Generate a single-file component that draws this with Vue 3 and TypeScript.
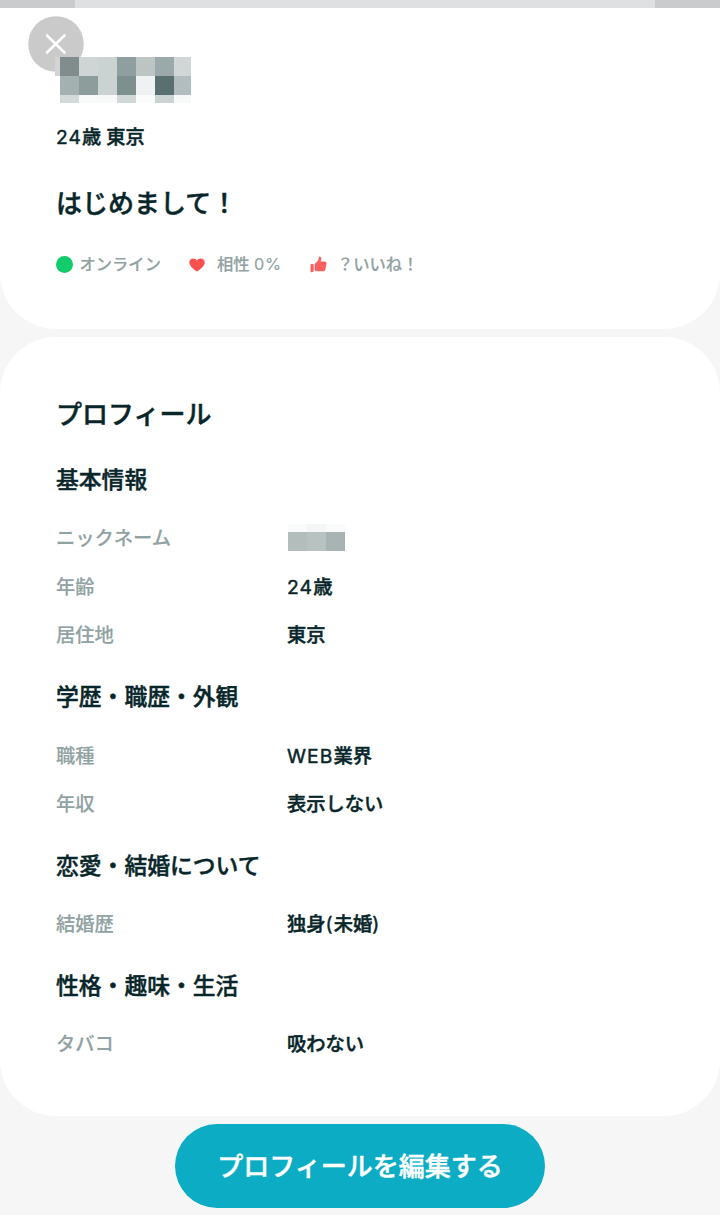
<script setup lang="ts">
import { h, type FunctionalComponent } from 'vue'

interface Row {
  label: string
  value: string
  masked?: boolean
}
interface Section {
  title: string
  rows: Row[]
}
interface Tile {
  x: number
  y: number
  w: number
  h: number
  fill: string
}

// Sets Latin runs apart from Japanese ones so each gets its own weight and spacing.
const MixedText: FunctionalComponent<{ text: string }> = (props) =>
  h(
    'span',
    (props.text.match(/[\x21-\x7e]+|[^\x21-\x7e]+/g) ?? []).map((run) =>
      /[\x21-\x7e]/.test(run) ? h('span', { class: 'latin' }, run) : run,
    ),
  )
MixedText.props = ['text']

const sections: Section[] = [
  {
    title: '基本情報',
    rows: [
      { label: 'ニックネーム', value: '', masked: true },
      { label: '年齢', value: '24歳' },
      { label: '居住地', value: '東京' },
    ],
  },
  {
    title: '学歴・職歴・外観',
    rows: [
      { label: '職種', value: 'WEB業界' },
      { label: '年収', value: '表示しない' },
    ],
  },
  { title: '恋愛・結婚について', rows: [{ label: '結婚歴', value: '独身(未婚)' }] },
  { title: '性格・趣味・生活', rows: [{ label: 'タバコ', value: '吸わない' }] },
]

const columns: number[] = [5, 24, 43, 62, 81, 100, 119, 136]
const bands: { y: number; h: number; fills: string[] }[] = [
  { y: 0, h: 19, fills: ['#818d8c', '#ced5d4', '#cbd3d2', '#8f9f9f', '#bcc5c4', '#9ca9ab', '#d1d7d7'] },
  { y: 19, h: 19, fills: ['#a4b1b1', '#8c9d9c', '#cbd3d2', '#7d908e', '#eff1f2', '#596f70', '#b1bdbe'] },
  { y: 38, h: 8, fills: ['#d2d9d8', '#f8fafa', '#f7f9f9', '#d1d8d7', '#fafbfb', '#ccd4d3', '#f7f9f9'] },
]
const nameTiles: Tile[] = [
  { x: 0, y: 0, w: 5, h: 19, fill: '#d3d5d5' },
  ...bands.flatMap((b) =>
    b.fills.map((fill, i) => ({ x: columns[i], y: b.y, w: columns[i + 1] - columns[i], h: b.h, fill })),
  ),
]
const nickTiles: Tile[] = [
  { x: 0, y: 0, w: 19, h: 8, fill: '#f9fafa' },
  { x: 19, y: 0, w: 19, h: 8, fill: '#f4f6f6' },
  { x: 38, y: 0, w: 19, h: 8, fill: '#f9fafa' },
  { x: 0, y: 8, w: 19, h: 19, fill: '#b3bebc' },
  { x: 19, y: 8, w: 19, h: 19, fill: '#b8c2c0' },
  { x: 38, y: 8, w: 19, h: 19, fill: '#a8b4b3' },
]
</script>

<template>
  <main class="screen">
    <div class="strip"><span class="strip-mid"></span></div>
    <section class="card summary">
      <button class="close" aria-label="閉じる">
        <svg width="56" height="56" viewBox="0 0 56 56">
          <circle cx="28" cy="28" r="27.8" fill="#cacaca" />
          <path d="M19 19.5 36.5 36.5M36.5 19.5 19 36.5" stroke="#fff" stroke-width="2.6" stroke-linecap="round" />
        </svg>
      </button>
      <svg class="name" width="136" height="46" viewBox="0 0 136 46" shape-rendering="crispEdges">
        <rect v-for="(t, i) in nameTiles" :key="i" :x="t.x" :y="t.y" :width="t.w" :height="t.h" :fill="t.fill" />
      </svg>
      <p class="place"><MixedText text="24歳 東京" /></p>
      <h1 class="greeting">はじめまして！</h1>
      <div class="stats">
        <span class="dot"></span>
        <span class="online">オンライン</span>
        <svg class="heart" width="16" height="14" viewBox="0 0 16 14">
          <path d="M8 13.6C5.8 12 0.3 8.4 0.3 4.5 0.3 2 2.1.4 4.3.4 5.9.4 7.2 1.3 8 2.6 8.8 1.3 10.1.4 11.7.4c2.2 0 4 1.6 4 4.1 0 3.9-5.5 7.5-7.7 9.1Z" fill="#fa5050" />
        </svg>
        <span class="match"><MixedText text="相性 0%" /></span>
        <svg class="thumb" width="17" height="17" viewBox="0 0 17 17">
          <path d="M1.7 7.9h.8c.7 0 1.2.5 1.2 1.2v5.3c0 .8-.5 1.4-1.2 1.6l-1 .2c-.6 0-1-.4-1-1V9.1c0-.7.5-1.2 1.2-1.2Z" fill="#f96160" />
          <path d="M4.6 8 8.1 4.6 8.8 1.5c.2-.8.9-1.1 1.6-.7 1.1.6 1.1 2.2.3 4.6h3.9c1.4 0 2.1.8 1.9 2l-1.1 6c-.2 1.2-.9 1.8-2.1 1.8H6.8c-1.3 0-2.2-.7-2.2-1.9Z" fill="#f96160" />
        </svg>
        <span class="likes">？いいね！</span>
      </div>
    </section>

    <section class="card profile">
      <h2 class="profile-title">プロフィール</h2>
      <div v-for="s in sections" :key="s.title" class="group">
        <h3 class="group-title">{{ s.title }}</h3>
        <dl v-for="r in s.rows" :key="r.label" class="row">
          <dt>{{ r.label }}</dt>
          <dd>
            <svg v-if="r.masked" class="nick" width="57" height="27" viewBox="0 0 57 27" shape-rendering="crispEdges">
              <rect v-for="(t, i) in nickTiles" :key="i" :x="t.x" :y="t.y" :width="t.w" :height="t.h" :fill="t.fill" />
            </svg>
            <MixedText v-else :text="r.value" />
          </dd>
        </dl>
      </div>
    </section>

    <footer class="footer">
      <button class="edit">プロフィールを編集する</button>
    </footer>
  </main>
</template>

<style>
body {
  margin: 0;
  background: #f6f6f6;
}
</style>

<style scoped>
.screen {
  width: 720px;
  height: 1215px;
  overflow: hidden;
  background: #f6f6f6;
  color: #08262a;
  font-family: Inter, "Noto Sans CJK JP", sans-serif;
  font-weight: 500;
  -webkit-text-stroke: 0.45px currentColor;
}
.screen * {
  box-sizing: border-box;
}
.screen :deep(.latin) {
  font-weight: 400;
  letter-spacing: 1.1px;
}
h1, h2, h3, p, dl, dd {
  margin: 0;
}
button {
  border: 0;
  padding: 0;
  font-family: inherit;
}
.strip {
  height: 8px;
  padding: 0 65px 0 75px;
  background: #cacbcc;
}
.strip-mid {
  display: block;
  height: 8px;
  background: #dfe0e1;
}
.card {
  background: #fff;
  padding: 0 56px;
  white-space: nowrap;
}
.summary {
  position: relative;
  height: 321px;
  padding-top: 49px;
  border-radius: 0 0 56px 56px;
}
.close {
  position: absolute;
  left: 28px;
  top: 8px;
  width: 56px;
  height: 56px;
  background: none;
}
.close svg {
  display: block;
}
.name {
  position: relative;
  display: block;
  margin-left: -1px;
}
.place {
  margin-top: 19px;
  font-size: 19.2px;
  line-height: 30px;
}
.greeting {
  margin-top: 32px;
  font-size: 26px;
  line-height: 40px;
  font-weight: 500;
}
.stats {
  display: flex;
  align-items: center;
  height: 24px;
  margin-top: 28px;
  font-size: 16.3px;
  line-height: 24px;
  color: #91a2a2;
  -webkit-text-stroke-width: 0.15px;
}
.stats :deep(.latin) {
  letter-spacing: 0.7px;
}
.dot {
  width: 17px;
  height: 17px;
  margin-left: -0.5px;
  border-radius: 50%;
  background: #12cc6c;
}
.online {
  width: 82px;
  margin-left: 7px;
}
.heart {
  margin: 2px 0 0 27px;
}
.match {
  width: 66px;
  margin-left: 12.5px;
}
.thumb {
  margin-left: 27px;
}
.likes {
  margin-left: 10px;
}
.profile {
  height: 779px;
  margin-top: 8px;
  padding-top: 58px;
  border-radius: 56px;
}
.profile-title {
  font-size: 26px;
  line-height: 40px;
  font-weight: 500;
}
.group {
  margin-top: 20.5px;
}
.profile-title + .group {
  margin-top: 28px;
}
.group-title {
  margin-bottom: 17px;
  font-size: 22.8px;
  line-height: 34px;
  font-weight: 500;
}
.row {
  display: grid;
  grid-template-columns: 231px 1fr;
  align-items: center;
  height: 48.6px;
  font-size: 19.3px;
  line-height: 30px;
}
dt {
  color: #91a2a2;
  -webkit-text-stroke-width: 0.15px;
}
.nick {
  display: block;
  margin: -2px 0 0 1px;
}
.footer {
  display: flex;
  justify-content: center;
  padding-top: 8px;
}
.edit {
  width: 370px;
  height: 84px;
  padding-top: 2px;
  border-radius: 42px;
  background: #0cadc4;
  color: #fff;
  font-size: 26px;
  font-weight: 500;
  line-height: 82px;
  white-space: nowrap;
  -webkit-text-stroke: 0.45px currentColor;
}
</style>
